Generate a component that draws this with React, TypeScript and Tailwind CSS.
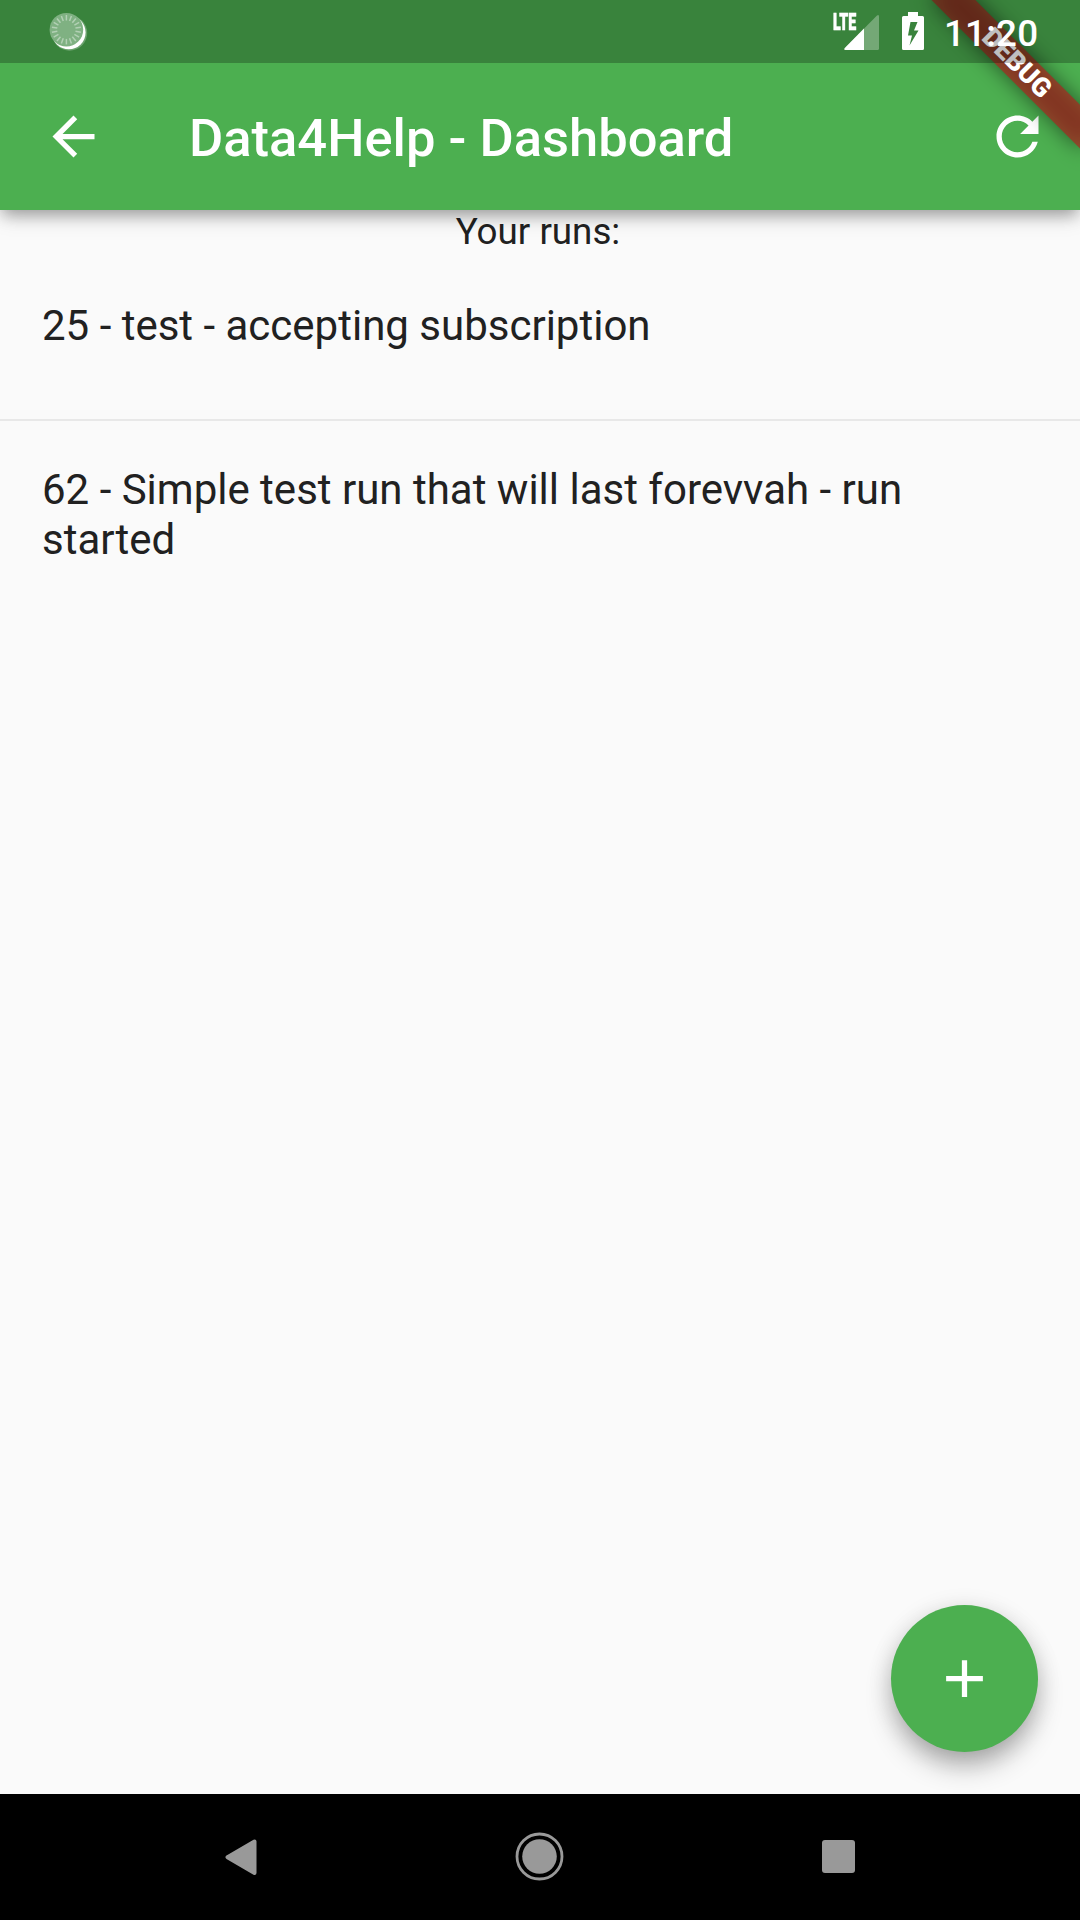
const runs = [
  { id: 25, title: 'test', status: 'accepting subscription' },
  { id: 62, title: 'Simple test run that will last forevvah', status: 'run started' },
];

const spokes = Array.from({ length: 18 }, (_, i) => i * 20);

function StatusBar() {
  return (
    <div className="relative z-20 flex h-[63px] shrink-0 items-center justify-between bg-black/25 pr-[43px] pl-[49px]">
      <svg className="h-[40px] w-[40px]" viewBox="0 0 40 40">
        <circle cx="20.500" cy="21" r="17.700" fill="#fff" opacity=".25" />
        <circle cx="19.800" cy="20.500" r="16.800" fill="#fff" />
        <circle cx="17.400" cy="17.700" r="16.800" fill="#7fb182" />
        {spokes.map((a) => (
          <path key={a} d="M17.400 3v5.500" stroke="#fff" strokeOpacity=".4" strokeWidth="1.500" transform={`rotate(${a} 17.4 17.7)`} />
        ))}
      </svg>
      <div className="flex h-[63px] items-start text-white">
        <span className="mt-[10.5px] block w-[11px] origin-left scale-x-[0.62] text-[23px] leading-[24px] font-black [-webkit-text-stroke:0.6px_white]">LTE</span>
        <svg className="mt-[14px] h-[37px] w-[36px]" viewBox="0 0 36 37">
          <path d="M1.5 36Q-.5 36 .8 34L33 1.5Q35 0 35 2.5V34.5Q35 36 33.5 36Z" fill="#fff" opacity=".3" />
          <path d="M20 14.5V36H1.5Q-.5 36 .8 34Z" fill="#fff" />
        </svg>
        <svg className="mt-[12px] ml-[22px] h-[38px] w-[22px]" viewBox="0 0 22 38">
          <path fillRule="evenodd" d="M6 0H16V4H20.500Q22 4 22 5.500V36.500Q22 38 20.500 38H1.500Q0 38 0 36.500V5.500Q0 4 1.500 4H6ZM8.500 10L6 23.500H10L7.500 33.500L16.500 18.500H12L15.500 10Z" fill="#fff" />
        </svg>
        <span className="ml-[20px] block w-[93px] pt-[12px] text-[36.75px] leading-[43px] font-medium tracking-[0.2px] whitespace-nowrap">11:20</span>
      </div>
    </div>
  );
}

function DebugBanner() {
  return (
    <div className="pointer-events-none absolute top-0 right-0 z-10 h-[210px] w-[240px] overflow-hidden">
      <div className="absolute top-0 left-full h-0 w-0 origin-top-left rotate-45">
        <div className="absolute top-[73.5px] left-[-105px] h-[31.5px] w-[210px] bg-black/50 blur-[10.4px]" />
        <div className="absolute top-[73.5px] left-[-105px] flex h-[31.5px] w-[210px] items-center justify-center bg-[#b71c1c]/63 text-[26.775px] leading-none font-black text-white">
          DEBUG
        </div>
      </div>
    </div>
  );
}

function AppBar() {
  return (
    <header className="flex h-[147px] shrink-0 items-center pr-[31.5px] pl-[42px] text-white">
      <svg className="h-[63px] w-[63px]" viewBox="0 0 24 24" fill="currentColor">
        <path d="M20 11H7.83l5.59-5.59L12 4l-8 8 8 8 1.410-1.410L7.830 13H20v-2z" />
      </svg>
      <h1 className="ml-[84px] flex-1 pt-[2px] text-[52.5px] leading-[62px] font-medium whitespace-nowrap">Data4Help - Dashboard</h1>
      <svg className="h-[63px] w-[63px]" viewBox="0 0 24 24" fill="currentColor">
        <path d="M17.650 6.350C16.200 4.900 14.210 4 12 4c-4.420 0-7.990 3.580-7.990 8s3.570 8 7.990 8c3.730 0 6.840-2.550 7.730-6h-2.080c-.82 2.330-3.040 4-5.650 4-3.310 0-6-2.690-6-6s2.690-6 6-6c1.660 0 3.140.69 4.220 1.780L13 11h7V4l-2.350 2.350z" />
      </svg>
    </header>
  );
}

function NavBar() {
  return (
    <nav className="flex h-[126px] shrink-0 items-center justify-between bg-black pr-[225px] pl-[225px]">
      <svg className="h-[36px] w-[32px]" viewBox="0 0 32 36">
        <path d="M2.500 18.200L29.500 2.500V34Z" fill="#999" stroke="#999" strokeWidth="4" strokeLinejoin="round" />
      </svg>
      <svg className="h-[50px] w-[50px]" viewBox="0 0 50 50">
        <circle cx="24.500" cy="24.500" r="22.500" fill="none" stroke="#999" strokeWidth="2.800" />
        <circle cx="24.500" cy="24.500" r="17.300" fill="#999" />
      </svg>
      <div className="mb-px h-[33px] w-[33px] rounded-[3px] bg-[#999]" />
    </nav>
  );
}

export default function App() {
  return (
    <div className="relative flex h-[1920px] w-[1080px] flex-col overflow-hidden bg-[#fafafa] font-['Roboto',sans-serif] text-[#212121]">
      <div className="relative z-10 flex flex-col bg-[#4caf50] shadow-[0_8px_14px_-3px_rgba(0,0,0,0.28),0_5px_22px_0_rgba(0,0,0,0.16)]">
        <StatusBar />
        <AppBar />
        <DebugBanner />
      </div>
      <main className="flex flex-1 flex-col">
        <p className="pr-[4px] text-center text-[36.75px] leading-[43px]">Your runs:</p>
        <ul className="mt-[4px] divide-y-2 divide-[#e8e8e8]">
          {runs.map((run) => (
            <li key={run.id} className="min-h-[164px] px-[42px] pt-[44px] text-[42px] leading-[50px]">
              {`${run.id} - ${run.title} - ${run.status}`}
            </li>
          ))}
        </ul>
      </main>
      <button className="absolute right-[42px] bottom-[168px] flex h-[147px] w-[147px] items-center justify-center rounded-full bg-[#4caf50] text-white shadow-[0_16px_28px_-3px_rgba(0,0,0,0.3),0_4px_24px_0_rgba(0,0,0,0.12)]">
        <svg className="h-[63px] w-[63px]" viewBox="0 0 24 24" fill="currentColor">
          <path d="M19 13h-6v6h-2v-6H5v-2h6V5h2v6h6v2z" />
        </svg>
      </button>
      <NavBar />
    </div>
  );
}
